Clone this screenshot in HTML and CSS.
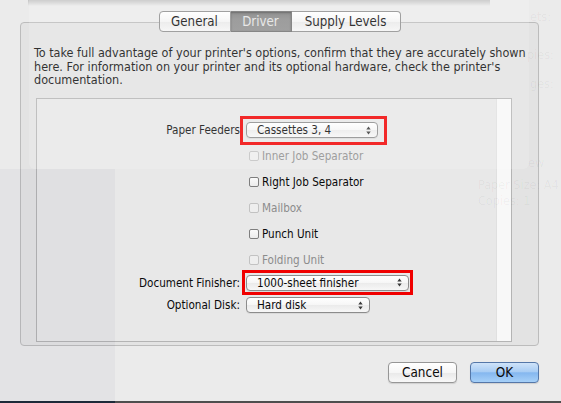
FILE: index.html
```html
<!DOCTYPE html>
<html>
<head>
<meta charset="utf-8">
<link rel="stylesheet" href="styles.css">
</head>
<body>
<div class="ghosts" aria-hidden="true">
  <div class="g-panel"></div>
  <div class="g-side"></div>
  <span class="g-text g-ets">ets:</span>
  <span class="g-text g-pies">pies:</span>
  <span class="g-text g-ges">ges:</span>
  <span class="g-text g-ew">ew</span>
  <span class="g-text g-size">Paper Size: A4</span>
  <span class="g-text g-copies">Copies: 1</span>
</div>

<div class="shade"></div>

<div class="tabs">
  <span class="tab t-general">General</span><span class="tab t-driver sel">Driver</span><span class="tab t-supply">Supply Levels</span>
</div>

<div class="group">
  <p class="intro">To take full advantage of your printer's options, confirm that they are accurately shown<br>here. For information on your printer and its optional hardware, check the printer's<br>documentation.</p>
  <div class="scroll">
    <div class="form">
      <span class="lbl">Paper Feeders</span>
      <span class="ctl"><span class="hl hl-feed"><span class="popup w-feed"><span>Cassettes 3, 4</span><svg class="arr" width="5" height="9" viewBox="0 0 5 9"><path d="M0.3 3.6 L2.5 0.6 L4.7 3.6Z M0.3 5.4 L2.5 8.4 L4.7 5.4Z" fill="#3a3a3a"/></svg></span></span></span>

      <span class="lbl"></span>
      <span class="ctl"><span class="chk dis"><span class="box"></span>Inner Job Separator</span></span>

      <span class="lbl"></span>
      <span class="ctl"><span class="chk"><span class="box"></span>Right Job Separator</span></span>

      <span class="lbl"></span>
      <span class="ctl"><span class="chk dis"><span class="box"></span>Mailbox</span></span>

      <span class="lbl"></span>
      <span class="ctl"><span class="chk"><span class="box"></span>Punch Unit</span></span>

      <span class="lbl"></span>
      <span class="ctl"><span class="chk dis"><span class="box"></span>Folding Unit</span></span>

      <span class="lbl">Document Finisher:</span>
      <span class="ctl"><span class="hl hl-fin"><span class="popup w-fin"><span>1000-sheet finisher</span><svg class="arr" width="5" height="9" viewBox="0 0 5 9"><path d="M0.3 3.6 L2.5 0.6 L4.7 3.6Z M0.3 5.4 L2.5 8.4 L4.7 5.4Z" fill="#3a3a3a"/></svg></span></span></span>

      <span class="lbl">Optional Disk:</span>
      <span class="ctl"><span class="popup w-disk"><span>Hard disk</span><svg class="arr" width="5" height="9" viewBox="0 0 5 9"><path d="M0.3 3.6 L2.5 0.6 L4.7 3.6Z M0.3 5.4 L2.5 8.4 L4.7 5.4Z" fill="#3a3a3a"/></svg></span></span>
    </div>
    <div class="track"></div>
  </div>
</div>

<div class="buttons">
  <span class="btn">Cancel</span>
  <span class="btn ok">OK</span>
</div>

<div class="edge"><span class="edge-left"></span></div>
</body>
</html>
```

FILE: styles.css
```css
html, body {
  margin: 0;
  padding: 0;
}
body {
  width: 561px;
  height: 403px;
  overflow: hidden;
  position: relative;
  background: #ebebeb;
  font-family: "DejaVu Sans Condensed", "DejaVu Sans", sans-serif;
  font-stretch: condensed;
  font-size: 11.6px;
  color: #0a0a0a;
}

/* faint content of the window behind the translucent sheet */
.ghosts {
  position: absolute;
  inset: 0;
  pointer-events: none;
  z-index: 5;
}
.g-panel {
  position: absolute;
  left: 29px;
  top: -10px;
  width: 500px;
  height: 179px;
  border-radius: 6px;
  background: rgba(255, 255, 255, 0.16);
}
.g-side {
  position: absolute;
  left: 0;
  top: 169px;
  width: 115px;
  height: 232px;
  background: rgba(40, 40, 80, 0.035);
}
.g-text {
  position: absolute;
  font-family: "DejaVu Sans", sans-serif;
  font-size: 12.5px;
  color: rgba(0, 0, 0, 0.045);
  white-space: nowrap;
}
.g-ets { left: 530px; top: 9px; }
.g-pies { left: 527px; top: 47px; }
.g-ges { left: 530px; top: 76px; }
.g-ew { left: 528px; top: 155px; }
.g-size { left: 478px; top: 177px; }
.g-copies { left: 478px; top: 193px; }

.shade {
  height: 6px;
  margin: 0 71px 0 28px;
  background: linear-gradient(#c4c4c4, #d6d6d6 50%, rgba(235, 235, 235, 0));
}

/* segmented tabs */
.tabs {
  position: relative;
  z-index: 2;
  display: flex;
  justify-content: center;
  margin: 5px 22px 0 20px;
  height: 21px;
}
.tab {
  box-sizing: border-box;
  height: 21px;
  display: flex;
  align-items: center;
  justify-content: center;
  font-size: 13.2px;
  color: #0a0a0a;
  border: 1px solid #8e8e8e;
  border-left: none;
  background: linear-gradient(#ffffff, #f4f4f4 50%, #e9e9e9 52%, #f5f5f5);
}
.t-general {
  width: 72px;
  border-left: 1px solid #8e8e8e;
  border-radius: 4px 0 0 4px;
}
.t-driver { width: 61px; }
.t-supply {
  width: 109px;
  border-radius: 0 4px 4px 0;
}
.tab.sel {
  color: #e4e4e4;
  background: linear-gradient(#7d7d7d, #8b8b8b 40%, #8e8e8e);
  border-color: #6f6f6f;
  box-shadow: inset 0 1px 2px rgba(0, 0, 0, 0.35);
}

/* tab group box */
.group {
  box-sizing: border-box;
  height: 324px;
  margin: -10px 22px 0 20px;
  padding-top: 23px;
  border: 1px solid #bcbcbc;
  border-radius: 4px;
  background: #e3e3e3;
  overflow: hidden;
}
.intro {
  margin: 0 0 0 13px;
  font-size: 12.5px;
  line-height: 13.5px;
  white-space: nowrap;
  color: #0a0a0a;
}

.scroll {
  box-sizing: border-box;
  display: flex;
  width: 476px;
  height: 244px;
  margin: 11.5px 0 0 15px;
  border: 1px solid #b4b4b4;
  background: #e8e8e8;
}
.form {
  flex: 1;
  display: grid;
  grid-template-columns: 203px 1fr;
  grid-template-rows: repeat(6, 26px) 19px 26px;
  column-gap: 6px;
  padding-top: 18px;
  align-items: center;
}
.track {
  width: 14px;
  background: #f8f8f8;
  border-left: 1px solid #e0e0e0;
}
.lbl {
  text-align: right;
  white-space: nowrap;
}
.ctl {
  display: flex;
  align-items: center;
}

/* popup buttons */
.popup {
  box-sizing: border-box;
  height: 16px;
  display: inline-flex;
  align-items: center;
  justify-content: space-between;
  padding: 0 6px 0 10px;
  border: 1px solid #8c8c8c;
  border-radius: 4px;
  background: linear-gradient(#ffffff, #f6f6f6 50%, #ebebeb 52%, #f7f7f7);
  box-shadow: 0 1px 0 rgba(0, 0, 0, 0.06);
  white-space: nowrap;
}
.w-feed { width: 132px; }
.w-fin { width: 163px; }
.w-disk { width: 124px; }

/* red annotation frames */
.hl {
  position: relative;
  display: inline-flex;
}
.hl::after {
  content: "";
  position: absolute;
  border: 3px solid #f00000;
}
.hl-feed::after { top: -6px; left: -6px; right: -9px; bottom: -7px; }
.hl-fin::after { top: -5px; left: -4px; right: -4px; bottom: -4px; }

/* checkboxes */
.chk {
  display: flex;
  align-items: center;
  gap: 3px;
  margin-left: 3px;
  white-space: nowrap;
}
.box {
  box-sizing: border-box;
  width: 10px;
  height: 10px;
  border: 1px solid #7e7e7e;
  border-radius: 2px;
  background: linear-gradient(#fafafa, #ececec);
}
.chk.dis { color: #8c8c8c; }
.chk.dis .box {
  border-color: #c2c2c2;
  background: #eeeeee;
}

/* dialog buttons */
.buttons {
  display: flex;
  justify-content: flex-end;
  gap: 13px;
  margin: 16px 22px 0 0;
}
.btn {
  box-sizing: border-box;
  width: 69px;
  height: 21px;
  display: flex;
  align-items: center;
  justify-content: center;
  font-size: 13.4px;
  border: 1px solid #969696;
  border-radius: 4px;
  background: linear-gradient(#ffffff, #f6f6f6 50%, #e9e9e9 52%, #f8f8f8);
  box-shadow: 0 1px 1px rgba(0, 0, 0, 0.12);
}
.btn.ok {
  border-color: #5577a8;
  background: linear-gradient(#cfe3f9, #a9cdf4 45%, #85b7ef 52%, #a6d0f8);
}

.edge {
  display: flex;
  height: 2px;
  margin-top: 18px;
  background: #4e4e4e;
}
.edge-left {
  width: 115px;
  background: #1d2a39;
}
```
